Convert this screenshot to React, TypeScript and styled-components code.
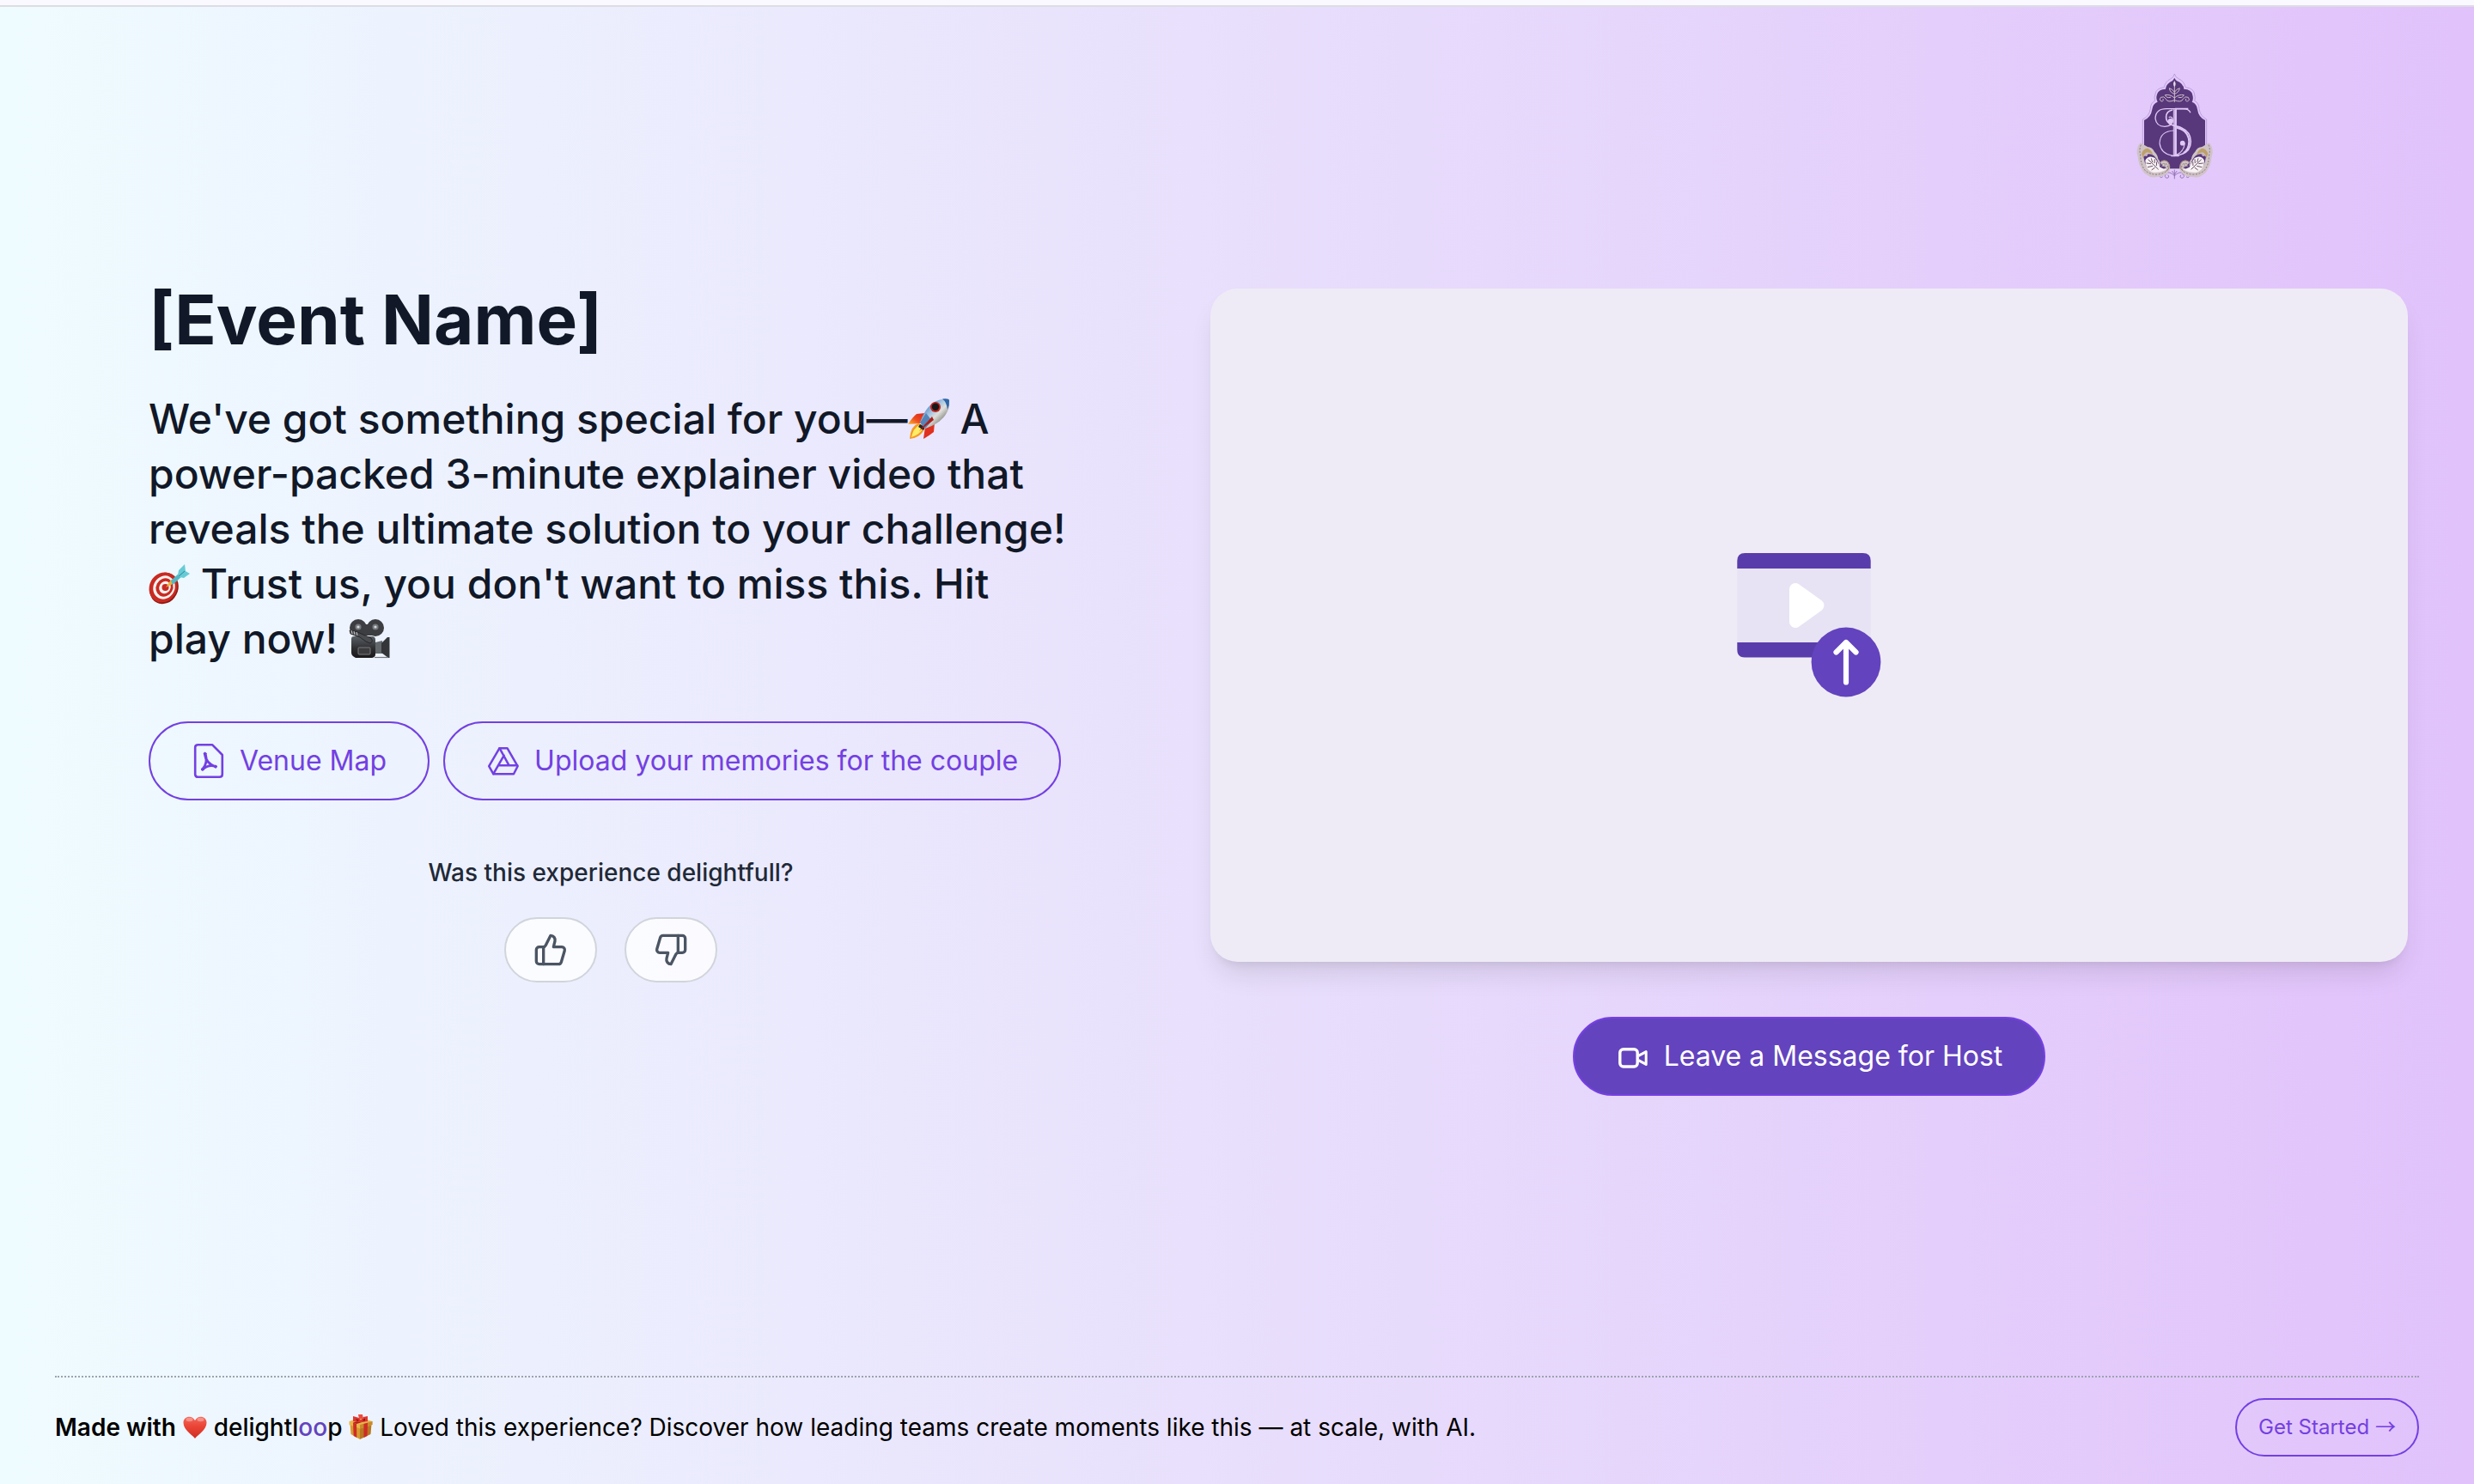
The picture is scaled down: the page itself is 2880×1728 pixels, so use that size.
import React from "react";
import styled, { createGlobalStyle } from "styled-components";
import { ThumbsUp, ThumbsDown } from "lucide-react";

const GlobalStyle = createGlobalStyle`
  *, *::before, *::after { box-sizing: border-box; }
  body { margin: 0; font-family: Inter, "Liberation Sans", sans-serif; }
  button { font: inherit; cursor: pointer; }
  h1, p { margin: 0; }
`;

const Page = styled.div`
  display: flex;
  flex-direction: column;
  height: 1728px;
  width: 2880px;
  overflow: hidden;
  background: linear-gradient(to right, #effcff, #e8dffc 50%, #e1c2fb);
`;

const TopBar = styled.div`
  flex: none;
  height: 8px;
  background: #f9f9ff;
  border-bottom: 2px solid #dddde4;
`;

const Header = styled.header`
  display: flex;
  justify-content: flex-end;
  height: 328px;
  padding: 62px 270px 0 0;
`;

const Main = styled.main`
  display: grid;
  grid-template-columns: 1076px 1394px;
  column-gap: 160px;
  padding-left: 173px;
`;

const Column = styled.section`
  display: flex;
  flex-direction: column;
`;

const Title = styled.h1`
  margin-top: -4px;
  font-size: 80px;
  line-height: 80px;
  font-weight: 700;
  color: #111827;
`;

const Lead = styled.p`
  margin-top: 44px;
  font-size: 48px;
  line-height: 64px;
  font-weight: 500;
  color: #111827;
`;

const Actions = styled.div`
  display: flex;
  gap: 16px;
  margin-top: 64px;
`;

const PillButton = styled.button<{ $filled?: boolean }>`
  display: flex;
  align-items: center;
  height: 92px;
  padding: 0 48px;
  border: 2px solid ${(p) => (p.$filled ? "#7540e2" : "#7340e2")};
  border-radius: 46px;
  font-size: 32px;
  line-height: 48px;
  white-space: nowrap;
  color: ${(p) => (p.$filled ? "#ffffff" : "#7340e2")};
  background: ${(p) => (p.$filled ? "#6343be" : "transparent")};
  svg { flex: none; margin-right: 16px; }
`;

const Feedback = styled.div`
  display: flex;
  flex-direction: column;
  align-items: center;
  margin-top: 64px;
`;

const Question = styled.p`
  font-size: 28px;
  line-height: 40px;
  font-weight: 500;
  color: #1f2937;
`;

const Votes = styled.div`
  display: flex;
  gap: 32px;
  margin-top: 32px;
`;

const VoteButton = styled.button`
  display: flex;
  align-items: center;
  justify-content: center;
  width: 108px;
  height: 76px;
  padding: 0;
  border: 2px solid #d1d5db;
  border-radius: 38px;
  background: rgba(255, 255, 255, 0.8);
  color: #4b5563;
`;

const VideoCard = styled.div`
  display: flex;
  align-items: center;
  justify-content: center;
  height: 784px;
  border-radius: 32px;
  background: #efebf6;
  box-shadow: 0 20px 30px -6px rgba(0, 0, 0, 0.1), 0 8px 12px -8px rgba(0, 0, 0, 0.1);
`;

const HostAction = styled.div`
  display: flex;
  justify-content: center;
  margin-top: 64px;
`;

const Footer = styled.footer`
  display: flex;
  align-items: center;
  justify-content: space-between;
  height: 126px;
  margin: auto 64px 0;
  padding-bottom: 8px;
  border-top: 2px dotted #9ca3af;
`;

const Credit = styled.p`
  font-size: 28px;
  line-height: 40px;
  color: #000;
`;

const Strong = styled.span`
  font-weight: 600;
`;

const Brand = styled.span`
  font-weight: 500;
`;

const BrandAccent = styled.span`
  color: #6343be;
`;

const StartButton = styled.button`
  height: 68px;
  width: 214px;
  padding: 0;
  border: 2px solid #7340e2;
  border-radius: 34px;
  background: transparent;
  color: #7340e2;
  font-size: 24px;
  line-height: 32px;
  white-space: nowrap;
`;

const Arrow = styled.span`
  font-family: "Noto Sans CJK SC", "DejaVu Sans", sans-serif;
  line-height: 1;
`;

const EmojiSvg = styled.svg`
  width: 1em;
  height: 1em;
  vertical-align: -0.14em;
  overflow: visible;
`;

const Rocket = () => (
  <EmojiSvg viewBox="0 0 48 48" role="img">
    <defs>
      <linearGradient id="rkBody" x1="0.2" y1="0.1" x2="0.85" y2="0.75">
        <stop offset="0" stopColor="#3f78b4" />
        <stop offset="0.4" stopColor="#a3c4e2" />
        <stop offset="0.62" stopColor="#dfe0dc" />
        <stop offset="1" stopColor="#77766f" />
      </linearGradient>
      <linearGradient id="rkFin" x1="1" y1="0" x2="0" y2="1">
        <stop offset="0" stopColor="#d8261a" />
        <stop offset="0.55" stopColor="#ee4a1f" />
        <stop offset="1" stopColor="#ffb730" />
      </linearGradient>
    </defs>
    <path d="M20 17 L10 18 Q5 22 0 30 L15 29Z" fill="url(#rkFin)" />
    <path d="M31 28 L30 39 Q25 43 18 47 L20 33Z" fill="#e0301f" />
    <path d="M12 29 Q3 32 2 47 Q14 46 19 36 L17 31Z" fill="#f59a22" />
    <path d="M13 31 Q6 35 4 45 Q14 42 17 35Z" fill="#ffec67" />
    <path d="M14 30 L12 33 L18 37 L20 33Z" fill="#24262b" />
    <path d="M48 1 C35 -1 22 5 14 28 L20 35 C42 28 50 13 48 1Z" fill="url(#rkBody)" />
    <path d="M40 0.5 Q48 -0.5 48 2.5 Q48.5 8 46 13 Q45 4 40 0.5Z" fill="#2d65a8" />
    <path d="M14 28 L21 17 L28 26 L20 35Z" fill="#5585b8" />
    <path d="M28 21 Q23 27 17 33 L13 38 Q20 32 30 25Z" fill="#b01e17" />
    <circle cx="32" cy="10" r="6" fill="#c0251c" />
    <circle cx="32" cy="9.8" r="4.2" fill="#17181b" />
  </EmojiSvg>
);

const Target = () => (
  <EmojiSvg viewBox="0 0 48 48" role="img">
    <ellipse cx="18" cy="29" rx="16.2" ry="18.8" transform="rotate(28 18 29)" fill="#8f1813" />
    <ellipse cx="17" cy="28" rx="16" ry="18" transform="rotate(28 17 28)" fill="#c92a22" />
    <ellipse cx="18" cy="28" rx="12.4" ry="14" transform="rotate(28 18 28)" fill="#f7f2ef" />
    <ellipse cx="18.5" cy="28" rx="9.8" ry="11" transform="rotate(28 18.5 28)" fill="#c92a22" />
    <ellipse cx="19" cy="28" rx="6.6" ry="7.5" transform="rotate(28 19 28)" fill="#f7f2ef" />
    <circle cx="19.5" cy="28" r="4" fill="#c92a22" />
    <path d="M20 28 L26 19 L30 23Z" fill="#e5b43a" />
    <path d="M26 20 L36 11 L40 14 L28 25Z" fill="#54b7c4" />
    <path d="M34 14 L35 8 L42 1 L43 9 L48 12 L41 17 L36 16Z" fill="#67cbd6" />
    <path d="M35 15 L42 9" stroke="#2b8797" strokeWidth="1" />
  </EmojiSvg>
);

const Camera = () => (
  <EmojiSvg viewBox="0 0 48 48" role="img">
    <defs>
      <linearGradient id="camBody" x1="0" y1="0" x2="0" y2="1">
        <stop offset="0" stopColor="#596066" />
        <stop offset="0.6" stopColor="#2c2b2d" />
        <stop offset="1" stopColor="#191719" />
      </linearGradient>
    </defs>
    <circle cx="11" cy="11" r="10" fill="#3c3e41" />
    <circle cx="31" cy="11" r="10" fill="#3c3e41" />
    <rect x="11" y="7" width="20" height="13" fill="#3c3e41" />
    <circle cx="11" cy="10" r="3.6" fill="#75797d" />
    <circle cx="31" cy="10" r="3.6" fill="#75797d" />
    <circle cx="11" cy="10" r="1.6" fill="#d5d8da" />
    <circle cx="31" cy="10" r="1.6" fill="#d5d8da" />
    <path d="M3 24 Q3 21 6 21 L27 21 Q31 21 31 25 L31 42 Q31 45 27 46 L8 46 Q3 44 3 40Z" fill="url(#camBody)" />
    <path d="M1 14 L10 16 L26 23 Q29 27 25 29 L20 27 L13 22 L2 18Z" fill="#4b4c50" stroke="#1e1e20" strokeWidth="0.8" />
    <path d="M3 14 L4 18 M6 15 L7 19 M9 16 L10 20" stroke="#c8c8ca" strokeWidth="1" />
    <rect x="11" y="34" width="14" height="8" rx="1" fill="#3c3c3f" stroke="#7b7b7f" strokeWidth="1" />
    <path d="M31 28 L39 26 L39 41 L31 41Z" fill="#63686c" />
    <path d="M38 29 L45 22 L47.5 22 L47.5 46 L46 46 L38 40Z" fill="#343538" />
    <path d="M30 45.5 L46 45.5" stroke="#77787c" strokeWidth="1.2" />
  </EmojiSvg>
);

const Heart = () => (
  <EmojiSvg viewBox="0 0 28 28" role="img">
    <defs>
      <linearGradient id="heartFill" x1="0" y1="0" x2="0" y2="1">
        <stop offset="0" stopColor="#f2695c" />
        <stop offset="0.45" stopColor="#ea4435" />
        <stop offset="1" stopColor="#cf2d22" />
      </linearGradient>
    </defs>
    <path d="M14 27 C10 22 0.5 17 0.5 8.5 C0.5 1 10.5 -1 14 6 C17.5 -1 27.5 1 27.5 8.5 C27.5 17 18 22 14 27Z" fill="url(#heartFill)" />
    <ellipse cx="7.5" cy="5" rx="4" ry="2.2" fill="#f9a79e" opacity="0.7" />
    <ellipse cx="20.5" cy="5" rx="4" ry="2.2" fill="#f9a79e" opacity="0.7" />
  </EmojiSvg>
);

const Gift = () => (
  <EmojiSvg viewBox="0 0 28 28" role="img">
    <path d="M1.5 10 L13 14 L13 28 L2.5 22Z" fill="#d79a2e" />
    <path d="M13 14 L26.5 10 L25.5 22 L13 28Z" fill="#b97722" />
    <path d="M0.5 7 L13 3 L27.5 7 L27.5 11 L13 15.5 L0.5 11Z" fill="#e8b64a" />
    <path d="M13 11 L27.5 7 L27.5 11 L13 15.5Z" fill="#c98a2c" />
    <path d="M5 8.5 L9 10 L9.3 26 L5.7 24Z M17.5 10 L22 8.8 L21.5 24 L17.5 26Z" fill="#cf2b25" />
    <path d="M5 8.5 L18 4 L22 6 L9 10Z" fill="#b31f1d" />
    <path d="M5 1 L12 3 L14 6 L17 2 L22 1 L22 7 L15 8 L12 8 L5 7Z" fill="#e0362f" />
    <path d="M8 4 L12 5.5 L10 7Z M19 3.5 L15.5 6 L19 6.5Z" fill="#7f1512" />
    <path d="M11 -1 L16 -1 L17 4 L12 4Z" fill="#ef4b40" />
  </EmojiSvg>
);

const PdfIcon = () => (
  <svg width="40" height="48" viewBox="0 0 40 48" fill="none" stroke="currentColor" strokeLinecap="round" strokeLinejoin="round">
    <path d="M7 5.2 H24 L35.8 17 V39.5 Q35.8 42.8 32.5 42.8 H7.5 Q4.2 42.8 4.2 39.5 V8.2 Q4.2 5.2 7.5 5.2Z" strokeWidth="2.6" />
    <path d="M15.3 16 C16 22 20 28 28 31 M16.2 16 C18 22 17 29 12.6 34 M13 34 C17 30 22 28.5 28.2 30.4" strokeWidth="2.8" />
    <circle cx="15.6" cy="15.6" r="1.4" fill="currentColor" />
    <circle cx="12.8" cy="33.8" r="1.4" fill="currentColor" />
    <circle cx="28" cy="30.6" r="1.4" fill="currentColor" />
  </svg>
);

const DriveIcon = () => (
  <svg width="40" height="40" viewBox="0 0 40 40" fill="none" stroke="currentColor" strokeWidth="2.5" strokeLinejoin="round" strokeLinecap="round">
    <path d="M15.5 5.2 H24.5 L36.6 26.2 L32 35.2 H8.3 L3.2 26.2 Z" />
    <path d="M15.5 5.2 L26.5 25.2 M20.7 13.6 L8.3 35.2 M14.3 25.2 H36.2" />
  </svg>
);

const VideoIcon = () => (
  <svg width="40" height="40" viewBox="0 0 40 40" fill="none" stroke="currentColor" strokeWidth="3.4" strokeLinejoin="round">
    <rect x="4.8" y="11.7" width="20.4" height="20.3" rx="4" />
    <path d="M26.4 19.4 L35.2 14.6 V29.4 L26.4 24.6" strokeWidth="3" />
  </svg>
);

const UploadVideoArt = () => (
  <svg width="156" height="168" viewBox="0 0 156 168">
    <rect x="0.3" y="17" width="155.4" height="88" fill="#e7e3f4" />
    <path d="M0.3 18 V9 Q0.3 0 9.3 0 H146.7 Q155.7 0 155.7 9 V18Z" fill="#593cab" />
    <path d="M0.3 104 V112.5 Q0.3 121.5 9.3 121.5 H146.7 Q155.7 121.5 155.7 112.5 V104Z" fill="#593cab" />
    <path d="M68 42 L94.5 61 L68 80Z" fill="#fff" stroke="#fff" strokeWidth="14" strokeLinejoin="round" />
  </svg>
);

const ArtWrap = styled.div`
  position: relative;
  width: 168px;
  height: 168px;
`;

const UploadBadge = styled.svg`
  position: absolute;
  left: 86px;
  top: 86px;
`;

const Paisley = ({ flip }: { flip?: boolean }) => (
  <g transform={flip ? "translate(430 0) scale(-1 1)" : undefined}>
    <path d="M95 289 Q82 302 83 325 Q86 335 88 350 Q90 366 98 378 Q104 394 120 402 Q134 413 150 408 Q186 409 197 384 Q202 366 190 354 Q176 346 163 356 L172 368 L164 372 Q164 350 157 346 Q156 332 144 320 Q136 304 120 303 Z" fill="#cfc3c6" />
    <path d="M97 296 Q90 312 95 330 Q96 368 112 386 Q132 402 158 399 Q188 394 191 378 Q192 362 180 361 Q171 364 178 371" fill="none" stroke="#8b7480" strokeWidth="3" strokeDasharray="6 5" />
    <path d="M99 328 Q104 308 120 308 Q135 314 139 332 Q128 320 115 323 Q106 329 105 343Z" fill="#bda06a" />
    <path d="M106 338 Q122 320 142 334 Q156 346 160 368 L186 374 Q163 394 137 388 Q112 380 106 338Z" fill="#58377b" />
    <path d="M112 350 Q124 330 146 342 Q156 356 164 374 Q176 381 188 381 Q156 398 133 390 Q112 380 112 350Z" fill="#f7f2f3" />
    <path d="M122 347 L158 382 M133 343 L137 357 M145 346 L144 360 M116 360 L132 362 M120 374 L138 370 M134 384 L146 375 M152 355 L151 369" stroke="#6a5169" strokeWidth="3" />
    <path d="M164 357 Q178 344 192 357 Q202 374 186 388" fill="none" stroke="#9c8274" strokeWidth="3" />
    <circle cx="176" cy="366" r="5" fill="#d8cccf" stroke="#876f68" strokeWidth="2" />
    <circle cx="115" cy="331" r="5" fill="#c9b2c4" />
  </g>
);

const Crest = () => (
  <svg width="150" height="160" viewBox="0 0 450 480" fill="none">
    <path d="M214 48 Q216 60 230 66 Q248 74 252 95 Q282 98 284 120 Q288 134 284 142 Q300 150 300 170 Q304 196 326 207 V380 H103 V207 Q126 196 130 170 Q130 150 146 142 Q142 130 147 118 Q150 98 178 95 Q182 74 200 66 Q212 60 214 48Z" stroke="#a98cc8" strokeWidth="2" />
    <path d="M214 62 Q218 72 232 77 Q246 86 247 101 Q274 102 277 122 Q281 136 275 146 Q292 152 294 172 Q298 200 321 210 V380 H108 V210 Q132 200 136 172 Q138 152 155 146 Q148 134 153 120 Q157 102 183 101 Q184 86 198 77 Q210 72 214 62Z" fill="#58377b" />
    <g stroke="#cdbcc9" strokeWidth="3" strokeLinecap="round">
      <path d="M214 80 V146 M214 132 Q198 118 181 122 Q186 134 200 130 M214 132 Q230 118 247 122 Q242 134 228 130" />
      <path d="M214 140 Q190 150 184 136 Q178 124 166 130 Q158 140 168 144 Q178 144 174 136 M214 140 Q238 150 244 136 Q250 124 262 130 Q270 140 260 144 Q250 144 254 136" />
      <path d="M214 118 Q198 114 196 98 Q206 100 214 112 Q222 100 232 98 Q230 114 214 118" />
    </g>
    <path d="M214 72 Q222 84 214 94 Q206 84 214 72Z" fill="#e6dbe5" />
    <g stroke="#dfc8f5" strokeLinecap="butt">
      <path d="M211 171 V332 M220 171 V332" strokeWidth="3" />
      <path d="M217 172 V332" strokeWidth="7" />
      <path d="M270 184 Q264 170 244 170 H190 Q148 168 147 204 Q151 232 180 232 Q208 230 208 210 Q206 194 194 200" strokeWidth="4" />
      <path d="M216 170 H262 M202 334 H230" strokeWidth="5" />
      <path d="M207 174 Q180 180 186 208 Q192 224 216 230 Q270 240 271 284 Q270 330 212 334" strokeWidth="5" />
      <path d="M222 236 Q262 244 265 284 Q264 312 246 324" strokeWidth="6" />
      <path d="M212 246 Q164 248 162 290 Q166 326 204 333 M212 333 Q246 326 250 290" strokeWidth="3.4" />
    </g>
    <circle cx="200" cy="213" r="9" fill="#dfc8f5" />
    <circle cx="242" cy="290" r="8.5" fill="#dfc8f5" />
    <path d="M188 381 H242" stroke="#f0e4f8" strokeWidth="3" />
    <g stroke="#8a6cab" strokeWidth="2.6" strokeLinecap="round">
      <path d="M214 384 V414 M206 388 L214 400 L222 388" />
      <path d="M214 404 Q196 386 184 396 Q176 410 188 412 Q198 410 192 402 M214 404 Q232 386 244 396 Q252 410 240 412 Q230 410 236 402" />
      <path d="M186 398 Q172 396 162 404 Q164 414 172 408 M242 398 Q256 396 266 404 Q264 414 256 408" />
    </g>
    <Paisley />
    <Paisley flip />
  </svg>
);

export default function App() {
  return (
    <Page>
      <GlobalStyle />
      <TopBar />
      <Header>
        <Crest />
      </Header>
      <Main>
        <Column>
          <Title>[Event Name]</Title>
          <Lead>
            We've got something special for you—<Rocket /> A<br />
            power-packed 3-minute explainer video that<br />
            reveals the ultimate solution to your challenge!<br />
            <Target /> Trust us, you don't want to miss this. Hit<br />
            play now! <Camera />
          </Lead>
          <Actions>
            <PillButton>
              <PdfIcon />
              Venue Map
            </PillButton>
            <PillButton>
              <DriveIcon />
              Upload your memories for the couple
            </PillButton>
          </Actions>
          <Feedback>
            <Question>Was this experience delightfull?</Question>
            <Votes>
              <VoteButton>
                <ThumbsUp size={40} />
              </VoteButton>
              <VoteButton>
                <ThumbsDown size={40} />
              </VoteButton>
            </Votes>
          </Feedback>
        </Column>
        <Column>
          <VideoCard>
            <ArtWrap>
              <UploadVideoArt />
              <UploadBadge width="82" height="82" viewBox="0 0 82 82" fill="none">
                <circle cx="41" cy="41" r="40.4" fill="#6343be" />
                <path d="M41 64.5 V18 M29.5 29.5 L41 18 L52.5 29.5" stroke="#fff" strokeWidth="6.2" strokeLinecap="round" strokeLinejoin="round" />
              </UploadBadge>
            </ArtWrap>
          </VideoCard>
          <HostAction>
            <PillButton $filled>
              <VideoIcon />
              Leave a Message for Host
            </PillButton>
          </HostAction>
        </Column>
      </Main>
      <Footer>
        <Credit>
          <Strong>Made with</Strong> <Heart />{" "}
          <Brand>
            delightl<BrandAccent>oo</BrandAccent>p
          </Brand>{" "}
          <Gift /> Loved this experience? Discover how leading teams create moments like this — at scale, with AI.
        </Credit>
        <StartButton>
          Get Started <Arrow>→</Arrow>
        </StartButton>
      </Footer>
    </Page>
  );
}
